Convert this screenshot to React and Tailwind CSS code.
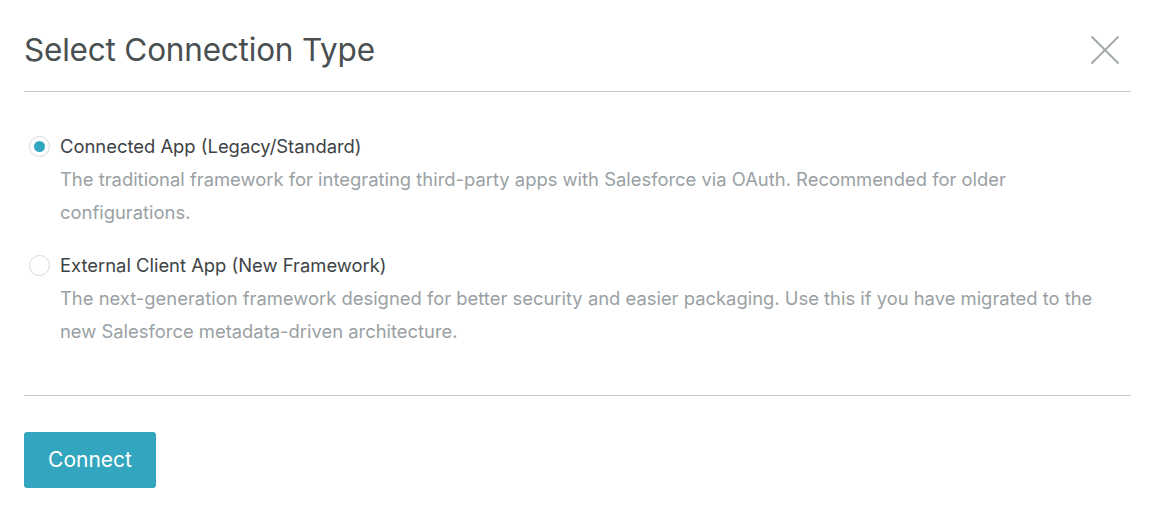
import { useState } from 'react'

const options = [
  {
    id: 'connected',
    label: 'Connected App (Legacy/Standard)',
    description:
      'The traditional framework for integrating third-party apps with Salesforce via OAuth. Recommended for older configurations.',
  },
  {
    id: 'external',
    label: 'External Client App (New Framework)',
    description:
      'The next-generation framework designed for better security and easier packaging. Use this if you have migrated to the new Salesforce metadata-driven architecture.',
  },
]

export default function App() {
  const [selected, setSelected] = useState('connected')

  return (
    <div className="min-h-screen bg-white pl-6 pr-[34px] font-['Inter',sans-serif] antialiased">
      <div className="flex h-[92px] items-center justify-between border-b border-[#cccccc] pt-[8px]">
        <h1 className="text-[31.5px] font-normal tracking-[-0.2px] text-[#4a4f52]">
          Select Connection Type
        </h1>
        <button type="button" aria-label="Close" className="mr-[11px] text-[#a3a9ab]">
          <svg width="30" height="30" viewBox="0 0 30 30" fill="none" stroke="currentColor" strokeWidth="2" strokeLinecap="round">
            <path d="M2 2 L28 28 M28 2 L2 28" />
          </svg>
        </button>
      </div>

      <div className="flex flex-col gap-[20px] border-b border-[#cccccc] pt-[38px] pb-[47px]">
        {options.map((opt) => {
          const on = selected === opt.id
          return (
            <label key={opt.id} className="flex cursor-pointer gap-[10px]">
              <input
                type="radio"
                name="conn"
                className="sr-only"
                checked={on}
                onChange={() => setSelected(opt.id)}
              />
              <span className="mt-[6px] ml-[5px] flex h-[21px] w-[21px] shrink-0 items-center justify-center rounded-full border border-[#d4d8da] bg-white">
                {on ? <span className="h-[11px] w-[11px] rounded-full bg-[#33a6bf]" /> : null}
              </span>
              <span className="min-w-0 max-w-[1040px]">
                <span className="block text-[18.4px] leading-[33px] text-[#3e4346]">{opt.label}</span>
                <span className="block text-[18.4px] leading-[33px] text-[#9aa1a4]">{opt.description}</span>
              </span>
            </label>
          )
        })}
      </div>

      <div className="pt-[36px]">
        <button
          type="button"
          className="h-[56px] w-[132px] rounded-[3px] bg-[#33a6bf] text-[21px] text-white"
        >
          Connect
        </button>
      </div>
    </div>
  )
}
